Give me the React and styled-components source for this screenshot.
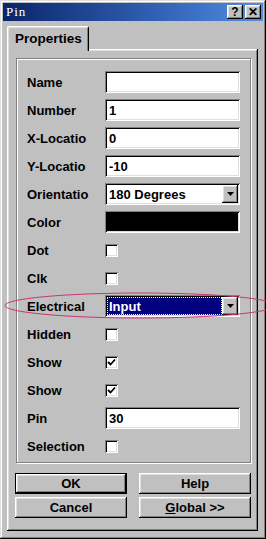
import styled, { createGlobalStyle } from 'styled-components';

const GlobalStyle = createGlobalStyle`
  html, body { margin: 0; padding: 0; background: #c0c0c0; }
  body { font-family: "Liberation Sans", Arial, sans-serif; }
`;

const raised = `
  box-shadow: inset -1px -1px 0 #000, inset 1px 1px 0 #fff,
    inset -2px -2px 0 #808080, inset 2px 2px 0 #dfdfdf;
`;

const sunken = `
  box-shadow: inset 1px 1px 0 #808080, inset -1px -1px 0 #fff,
    inset 2px 2px 0 #000, inset -2px -2px 0 #dfdfdf;
`;

const Window = styled.div`
  position: relative;
  width: 266px;
  height: 539px;
  box-sizing: border-box;
  padding: 3px;
  background: #c0c0c0;
  box-shadow: inset -1px -1px 0 #000, inset 1px 1px 0 #dfdfdf,
    inset -2px -2px 0 #808080, inset 2px 2px 0 #fff;
  display: flex;
  flex-direction: column;
  overflow: hidden;
`;

const TitleBar = styled.div`
  height: 18px;
  display: flex;
  align-items: center;
  justify-content: space-between;
  padding: 0 2px 0 3px;
  background: linear-gradient(to right, #0a246a, #3c72c8 75%, #5a8ad8);
`;

const TitleText = styled.span`
  color: #fff;
  font-family: "Liberation Serif", "Noto Sans CJK SC", serif;
  font-size: 13px;
  letter-spacing: 1px;
  line-height: 18px;
`;

const TitleButtons = styled.div`
  display: flex;
  gap: 2px;
`;

const TitleButton = styled.div`
  width: 16px;
  height: 14px;
  box-sizing: border-box;
  background: #c0c0c0;
  ${raised}
  display: flex;
  align-items: center;
  justify-content: center;
  font-weight: bold;
  font-size: 12px;
  color: #000;
  line-height: 1;
`;

const Body = styled.div`
  padding: 5px 5px 0 4px;
`;

const TabStrip = styled.div`
  display: flex;
  height: 24px;
`;

const Tab = styled.div`
  position: relative;
  z-index: 1;
  width: 82px;
  height: 25px;
  box-sizing: border-box;
  background: #c0c0c0;
  border-top: 1px solid #fff;
  border-left: 1px solid #fff;
  border-right: 1px solid #000;
  border-radius: 2px 2px 0 0;
  box-shadow: inset 1px 1px 0 #dfdfdf, inset -1px 0 0 #808080;
  padding: 4px 0 0 7px;
  font-weight: bold;
  font-size: 13.5px;
  color: #000;
`;

const Panel = styled.div`
  height: 482px;
  margin-top: -1px;
  box-sizing: border-box;
  padding: 9px 7px 0 9px;
  box-shadow: inset -1px -1px 0 #000, inset 1px 1px 0 #fff,
    inset -2px -2px 0 #808080, inset 2px 2px 0 #dfdfdf;
`;

const GroupBox = styled.div`
  height: 405px;
  box-sizing: border-box;
  border: 1px solid #808080;
  box-shadow: inset 1px 1px 0 #fff, 1px 1px 0 #fff;
  padding: 12px 0 0 10px;
  display: flex;
  flex-direction: column;
  gap: 6px;
`;

const Row = styled.div`
  display: flex;
  align-items: center;
  height: 22px;
`;

const Label = styled.div`
  width: 64px;
  margin-right: 14px;
  white-space: nowrap;
  font-weight: bold;
  font-size: 13px;
  color: #000;
`;

const Field = styled.div`
  width: 135px;
  height: 22px;
  box-sizing: border-box;
  background: ${(p) => p.$fill || '#fff'};
  ${sunken}
  padding: 2px 2px 2px 4px;
  display: flex;
  align-items: center;
  font-weight: bold;
  font-size: 13px;
  color: #000;
`;

const Value = styled.span`
  flex: 1;
`;

const Highlight = styled.div`
  flex: 1;
  align-self: stretch;
  margin-left: -2px;
  padding-left: 2px;
  background: #000080;
  color: #fff;
  outline: 1px dotted #ffffa0;
  outline-offset: -1px;
  display: flex;
  align-items: center;
`;

const DropButton = styled.div`
  width: 16px;
  height: 18px;
  box-sizing: border-box;
  background: #c0c0c0;
  ${raised}
  display: flex;
  align-items: center;
  justify-content: center;
`;

const Check = styled.div`
  width: 13px;
  height: 13px;
  box-sizing: border-box;
  background: #fff;
  ${sunken}
  display: flex;
  align-items: center;
  justify-content: center;
`;

const ButtonGrid = styled.div`
  margin: 10px 0 0 -1px;
  display: grid;
  grid-template-columns: 112px 112px;
  column-gap: 12px;
  row-gap: 3px;
`;

const Button = styled.button`
  height: 21px;
  box-sizing: border-box;
  padding: 0;
  border: ${(p) => (p.$default ? '1px solid #000' : 'none')};
  background: #c0c0c0;
  ${raised}
  font-family: "Liberation Sans", Arial, sans-serif;
  font-weight: bold;
  font-size: 13px;
  color: #000;
  u { text-decoration: underline; }
`;

const Annotation = styled.svg`
  position: absolute;
  top: 0;
  left: 0;
  width: 266px;
  height: 539px;
  pointer-events: none;
`;

const Arrow = () => (
  <svg width="7" height="4" viewBox="0 0 7 4">
    <path d="M0 0h7L3.5 4z" fill="#000" />
  </svg>
);

const CheckBox = ({ checked }) => (
  <Check>
    {checked && (
      <svg width="9" height="9" viewBox="0 0 9 9">
        <polyline points="1,4 3.5,6.5 8,1.5" fill="none" stroke="#000" strokeWidth="1.8" />
      </svg>
    )}
  </Check>
);

// labels as they show in the dialog (the control cuts the long ones)
const rows = [
  { label: 'Name', kind: 'text', value: '' },
  { label: 'Number', kind: 'text', value: '1' },
  { label: 'X-Locatio', kind: 'text', value: '0' },
  { label: 'Y-Locatio', kind: 'text', value: '-10' },
  { label: 'Orientatio', kind: 'select', value: '180 Degrees' },
  { label: 'Color', kind: 'color' },
  { label: 'Dot', kind: 'check', value: false },
  { label: 'Clk', kind: 'check', value: false },
  { label: 'Electrical', kind: 'active', value: 'Input' },
  { label: 'Hidden', kind: 'check', value: false },
  { label: 'Show', kind: 'check', value: true },
  { label: 'Show', kind: 'check', value: true },
  { label: 'Pin', kind: 'text', value: '30' },
  { label: 'Selection', kind: 'check', value: false },
];

const renderControl = (row) => {
  if (row.kind === 'check') return <CheckBox checked={row.value} />;
  if (row.kind === 'color') return <Field $fill="#000" />;
  if (row.kind === 'select')
    return (
      <Field>
        <Value>{row.value}</Value>
        <DropButton>
          <Arrow />
        </DropButton>
      </Field>
    );
  if (row.kind === 'active')
    return (
      <Field>
        <Highlight>{row.value}</Highlight>
        <DropButton>
          <Arrow />
        </DropButton>
      </Field>
    );
  return (
    <Field>
      <Value>{row.value}</Value>
    </Field>
  );
};

const App = () => {
  return (
    <Window>
      <GlobalStyle />
      <TitleBar>
        <TitleText>Pin</TitleText>
        <TitleButtons>
          <TitleButton>?</TitleButton>
          <TitleButton>✕</TitleButton>
        </TitleButtons>
      </TitleBar>
      <Body>
        <TabStrip>
          <Tab>Properties</Tab>
        </TabStrip>
        <Panel>
          <GroupBox>
            {rows.map((row, i) => (
              <Row key={i}>
                <Label>{row.label}</Label>
                {renderControl(row)}
              </Row>
            ))}
          </GroupBox>
          <ButtonGrid>
            <Button $default>OK</Button>
            <Button>Help</Button>
            <Button>Cancel</Button>
            <Button>
              <u>G</u>lobal &gt;&gt;
            </Button>
          </ButtonGrid>
        </Panel>
      </Body>
      <Annotation viewBox="0 0 266 539">
        <ellipse cx="140" cy="305.5" rx="135" ry="12.5" fill="none" stroke="#cc3377" strokeWidth="1" />
      </Annotation>
    </Window>
  );
};

export default App;
